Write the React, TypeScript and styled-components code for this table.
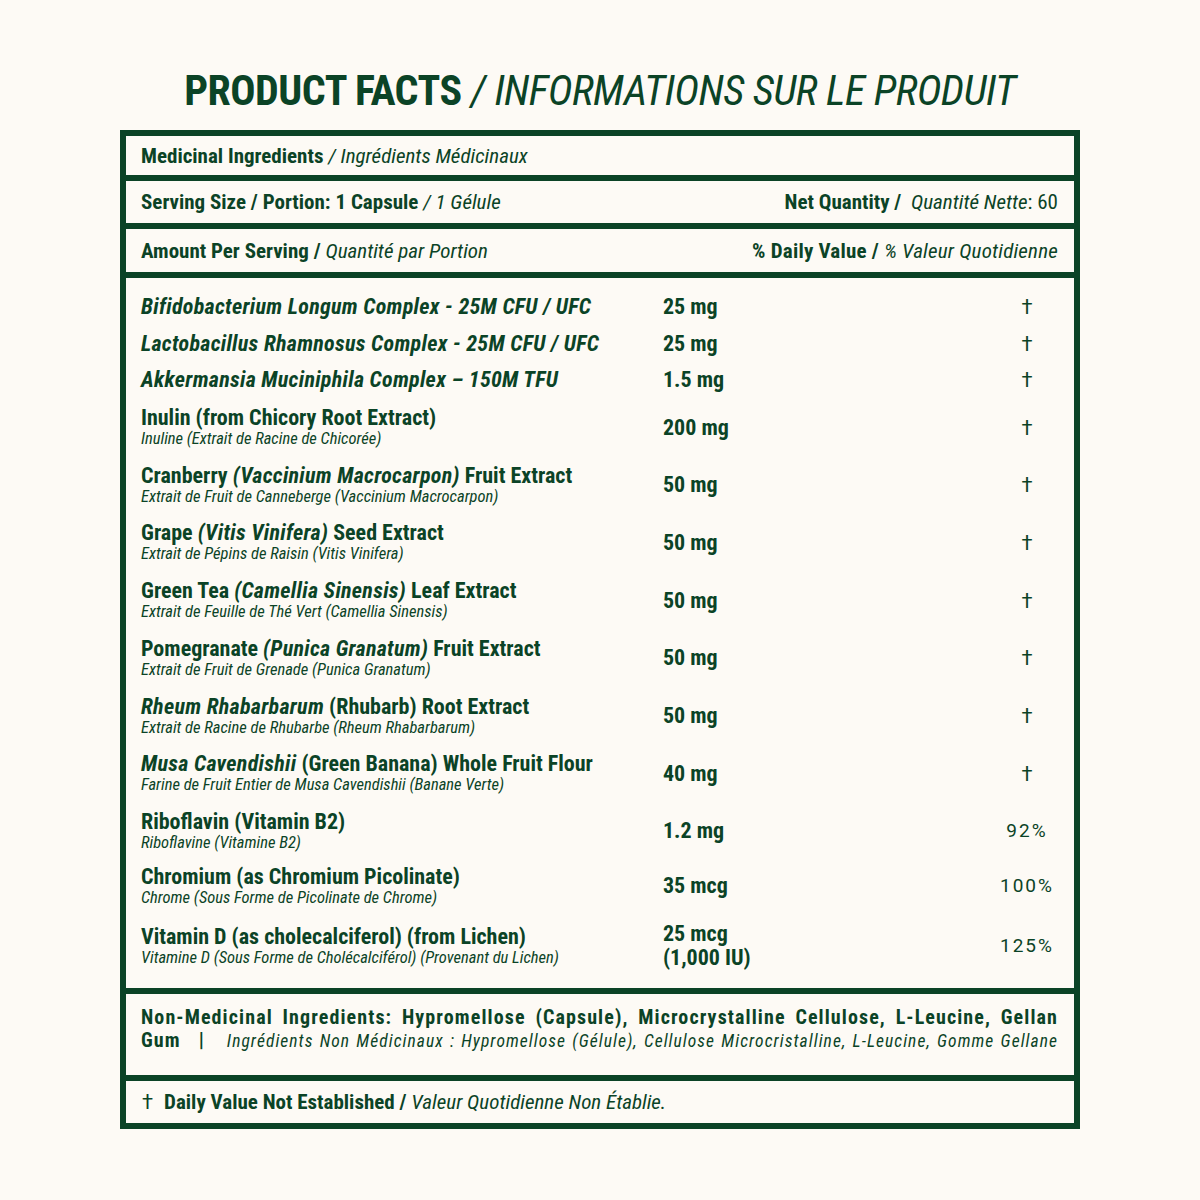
import styled, { createGlobalStyle } from 'styled-components'

const GREEN = '#0b4326'
const CREAM = '#fdfaf5'
const COND = `"Liberation Sans Narrow", "Roboto Condensed", "DejaVu Sans Condensed", Roboto, sans-serif`

const GlobalStyle = createGlobalStyle`
  body {
    margin: 0;
    background: ${CREAM};
    color: ${GREEN};
    font-family: ${COND};
  }
`

type Ingredient = {
  name: React.ReactNode
  sub?: string
  amount: React.ReactNode
  dv: string
  compact?: boolean
  tall?: boolean
}

const ingredients: Ingredient[] = [
  { name: <i>Bifidobacterium Longum Complex - 25M CFU / UFC</i>, amount: '25 mg', dv: '†' },
  { name: <i>Lactobacillus Rhamnosus Complex - 25M CFU / UFC</i>, amount: '25 mg', dv: '†' },
  { name: <i>Akkermansia Muciniphila Complex – 150M TFU</i>, amount: '1.5 mg', dv: '†' },
  { name: 'Inulin (from Chicory Root Extract)', sub: 'Inuline (Extrait de Racine de Chicorée)', amount: '200 mg', dv: '†' },
  { name: <>Cranberry <i>(Vaccinium Macrocarpon)</i> Fruit Extract</>, sub: 'Extrait de Fruit de Canneberge (Vaccinium Macrocarpon)', amount: '50 mg', dv: '†' },
  { name: <>Grape <i>(Vitis Vinifera)</i> Seed Extract</>, sub: 'Extrait de Pépins de Raisin (Vitis Vinifera)', amount: '50 mg', dv: '†' },
  { name: <>Green Tea <i>(Camellia Sinensis)</i> Leaf Extract</>, sub: 'Extrait de Feuille de Thé Vert (Camellia Sinensis)', amount: '50 mg', dv: '†' },
  { name: <>Pomegranate <i>(Punica Granatum)</i> Fruit Extract</>, sub: 'Extrait de Fruit de Grenade (Punica Granatum)', amount: '50 mg', dv: '†' },
  { name: <><i>Rheum Rhabarbarum</i> (Rhubarb) Root Extract</>, sub: 'Extrait de Racine de Rhubarbe (Rheum Rhabarbarum)', amount: '50 mg', dv: '†' },
  { name: <><i>Musa Cavendishii</i> (Green Banana) Whole Fruit Flour</>, sub: 'Farine de Fruit Entier de Musa Cavendishii (Banane Verte)', amount: '40 mg', dv: '†' },
  { name: 'Riboflavin (Vitamin B2)', sub: 'Riboflavine (Vitamine B2)', amount: '1.2 mg', dv: '92%', compact: true },
  { name: 'Chromium (as Chromium Picolinate)', sub: 'Chrome (Sous Forme de Picolinate de Chrome)', amount: '35 mcg', dv: '100%' },
  { name: 'Vitamin D (as cholecalciferol) (from Lichen)', sub: 'Vitamine D (Sous Forme de Cholécalciférol) (Provenant du Lichen)', amount: <>25 mcg<br />(1,000 IU)</>, dv: '125%', tall: true },
]

export default function App() {
  return (
    <Page>
      <GlobalStyle />
      <Title>
        <b>PRODUCT FACTS</b> <i>/ INFORMATIONS SUR LE PRODUIT</i>
      </Title>
      <Panel>
        <HeadRow $h={39}>
          <span><b>Medicinal Ingredients</b> <i>/ Ingrédients Médicinaux</i></span>
        </HeadRow>
        <HeadRow $h={42}>
          <span><b>Serving Size / Portion: 1 Capsule</b> <i>/ 1 Gélule</i></span>
          <span><b>Net Quantity / </b>&nbsp;<i>Quantité Nette</i>: 60</span>
        </HeadRow>
        <HeadRow $h={43}>
          <span><b>Amount Per Serving /</b> <i>Quantité par Portion</i></span>
          <Wide><b>% Daily Value /</b> <i>% Valeur Quotidienne</i></Wide>
        </HeadRow>
        <IngredientList>
          {ingredients.map((it, i) => (
            <IngRow key={i} $compact={!!it.compact}>
              <NameCell>
                <Name $single={!it.sub}>{it.name}</Name>
                {it.sub && <Sub>{it.sub}</Sub>}
              </NameCell>
              <Amount $tall={!!it.tall}>{it.amount}</Amount>
              <DV $dagger={it.dv === '†'}>{it.dv}</DV>
            </IngRow>
          ))}
        </IngredientList>
        <NonMed>
          <NonMedLead>Non-Medicinal Ingredients: Hypromellose (Capsule), Microcrystalline Cellulose, L-Leucine, Gellan</NonMedLead>
          <NonMedTail>
            <b>Gum</b>
            <Bar>|</Bar>
            <FrenchList>Ingrédients Non Médicinaux : Hypromellose (Gélule), Cellulose Microcristalline, L-Leucine, Gomme Gellane</FrenchList>
          </NonMedTail>
        </NonMed>
        <Footer>
          <Dagger>†</Dagger>
          <b>Daily Value Not Established /</b>&nbsp;<i>Valeur Quotidienne Non Établie.</i>
        </Footer>
      </Panel>
    </Page>
  )
}

const Page = styled.div`
  padding-top: 66px;
  padding-bottom: 72px;
`

const Title = styled.h1`
  margin: 0 0 14px;
  text-align: center;
  font-size: 42px;
  line-height: 50px;
  font-weight: 400;
  letter-spacing: -0.5px;
  b { font-weight: 700; }
  i { font-weight: 400; }
`

const Panel = styled.div`
  width: 960px;
  box-sizing: border-box;
  margin: 0 auto;
  border: 6px solid ${GREEN};
  & > * + * {
    border-top: 6px solid ${GREEN};
  }
`

const HeadRow = styled.div<{ $h: number }>`
  height: ${p => p.$h}px;
  display: flex;
  align-items: center;
  justify-content: space-between;
  padding: 0 16px 0 15px;
  font-size: 21px;
  b { font-weight: 700; }
  i { font-weight: 400; }
`

const Wide = styled.span`
  letter-spacing: 0.2px;
`

const IngredientList = styled.div`
  display: flex;
  flex-direction: column;
  gap: 14.7px;
  padding: 18px 7px 18px 15px;
`

const IngRow = styled.div<{ $compact: boolean }>`
  display: grid;
  grid-template-columns: 522px 1fr 80px;
  align-items: center;
  margin-bottom: ${p => (p.$compact ? -3 : 0)}px;
`

const NameCell = styled.div`
  display: flex;
  flex-direction: column;
`

const Name = styled.div<{ $single: boolean }>`
  font-size: 22px;
  font-weight: 700;
  line-height: ${p => (p.$single ? 22 : 23)}px;
  i { letter-spacing: 0.3px; }
`

const Sub = styled.div`
  font-size: 16.5px;
  font-style: italic;
  line-height: 20px;
`

const Amount = styled.div<{ $tall: boolean }>`
  font-size: 22px;
  font-weight: 700;
  line-height: ${p => (p.$tall ? 24 : 22)}px;
`

const DV = styled.div<{ $dagger: boolean }>`
  text-align: center;
  font-family: Roboto, sans-serif;
  font-size: ${p => (p.$dagger ? 20 : 19)}px;
  line-height: 22px;
  letter-spacing: ${p => (p.$dagger ? 0 : 2)}px;
  font-weight: 400;
`

const NonMed = styled.div`
  height: 69px;
  padding: 12px 16px 0 15px;
  font-size: 20px;
  line-height: 23px;
  letter-spacing: 1.1px;
  b { font-weight: 700; }
`

const NonMedLead = styled.div`
  font-weight: 700;
  white-space: nowrap;
  text-align: justify;
  text-align-last: justify;
`

const NonMedTail = styled.div`
  display: flex;
  align-items: baseline;
`

const Bar = styled.span`
  margin: 0 22px 0 18px;
  font-weight: 700;
`

const FrenchList = styled.span`
  flex: 1;
  font-size: 17.5px;
  font-style: italic;
  letter-spacing: 1.05px;
  white-space: nowrap;
  text-align: justify;
  text-align-last: justify;
`

const Footer = styled.div`
  height: 42px;
  display: flex;
  align-items: center;
  padding: 0 15px 0 16px;
  font-size: 21px;
  b { font-weight: 700; }
  i { font-weight: 400; }
`

const Dagger = styled.span`
  font-family: Roboto, sans-serif;
  font-size: 20px;
  margin-right: 11px;
`
